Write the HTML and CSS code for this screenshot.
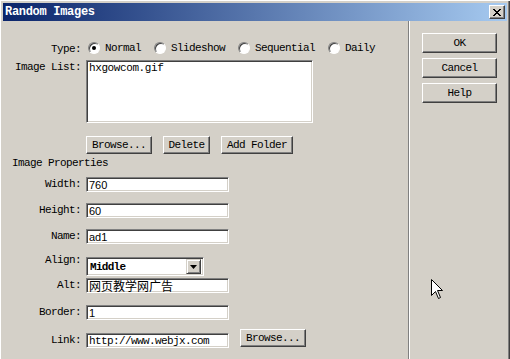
FILE: index.html
```html
<!DOCTYPE html>
<html lang="en">
<head>
  <meta charset="UTF-8" />
  <title>Random Images</title>
  <link rel="stylesheet" href="styles.css">
</head>
<body>

<div class="window">
  <div class="titlebar">
    <span class="title">Random Images</span>
    <span class="close">
      <svg width="8" height="7" viewBox="0 0 8 7"><path d="M0 0 L7 7 M1 0 L8 7 M7 0 L0 7 M8 0 L1 7" stroke="#000" stroke-width="1"/></svg>
    </span>
  </div>

  <div class="content">
    <div class="main">
      <div class="row row-type">
        <label class="lbl">Type:</label>
        <div class="radios">
          <span class="opt"><span class="radio checked"></span>Normal</span>
          <span class="opt"><span class="radio"></span>Slideshow</span>
          <span class="opt"><span class="radio"></span>Sequential</span>
          <span class="opt"><span class="radio"></span>Daily</span>
        </div>
      </div>

      <div class="row row-list">
        <label class="lbl lbl-top">Image List:</label>
        <textarea class="field list">hxgowcom.gif</textarea>
      </div>

      <div class="row row-buttons">
        <button class="btn btn-browse">Browse...</button>
        <button class="btn btn-delete">Delete</button>
        <button class="btn btn-folder">Add Folder</button>
      </div>

      <div class="heading">Image Properties</div>

      <div class="row row-width">
        <label class="lbl">Width:</label>
        <input class="field text sans" type="text" value="760" />
      </div>

      <div class="row row-gap">
        <label class="lbl">Height:</label>
        <input class="field text sans" type="text" value="60" />
      </div>

      <div class="row row-gap">
        <label class="lbl">Name:</label>
        <input class="field text sans" type="text" value="ad1" />
      </div>

      <div class="row row-align">
        <label class="lbl lbl-align">Align:</label>
        <div class="field select">
          <span class="select-text">Middle</span>
          <span class="arrow">
            <svg width="7" height="4" viewBox="0 0 7 4"><path d="M0 0 H7 L3.5 4 Z" fill="#000"/></svg>
          </span>
        </div>
      </div>

      <div class="row row-alt">
        <label class="lbl">Alt:</label>
        <input class="field text cjk" type="text" value="网页教学网广告" />
      </div>

      <div class="row row-border">
        <label class="lbl">Border:</label>
        <input class="field text sans" type="text" value="1" />
      </div>

      <div class="row row-link">
        <label class="lbl">Link:</label>
        <input class="field text mono" type="text" value="http://www.webjx.com" />
        <button class="btn btn-browse btn-link">Browse...</button>
      </div>
    </div>

    <div class="side">
      <button class="btn side-btn">OK</button>
      <button class="btn side-btn">Cancel</button>
      <button class="btn side-btn">Help</button>
    </div>
  </div>

  <!-- mouse pointer -->
  <svg class="pointer" width="13" height="21" viewBox="0 0 13 21">
    <path d="M0.5 0.5 V16.5 L4.5 12.5 L7.5 19.5 L9.5 18.5 L6.5 11.5 H11.5 Z" fill="#fff" stroke="#000" stroke-width="1"/>
  </svg>
</div>

</body>
</html>
```

FILE: styles.css
```css
body {
  margin: 0;
  background: #d4d0c8;
  font-family: "Liberation Mono", "DejaVu Sans Mono", monospace;
  font-size: 11px;
  letter-spacing: -0.6px;
  color: #000;
}
.window {
  position: relative;
  width: 510px;
  height: 359px;
  box-sizing: border-box;
  padding: 3px 3px 0 3px;
  background: #d4d0c8;
  box-shadow: inset 1px 1px #fff, inset -1px 0 #404040, inset -2px 0 #808080;
  overflow: hidden;
}
.titlebar {
  height: 18px;
  display: flex;
  align-items: center;
  justify-content: space-between;
  padding: 0 2px 0 2px;
  background: linear-gradient(to right, #0a246a, #a6caf0);
}
.title {
  color: #fff;
  font-weight: bold;
  font-size: 12px;
  letter-spacing: -0.3px;
}
.close {
  width: 16px;
  height: 14px;
  box-sizing: border-box;
  display: flex;
  align-items: center;
  justify-content: center;
  background: #d4d0c8;
  border: 1px solid;
  border-color: #fff #404040 #404040 #fff;
  box-shadow: inset -1px -1px #808080;
}
.content {
  display: flex;
  height: 338px;
}
.main {
  width: 406px;
  box-sizing: border-box;
  border-right: 1px solid #808080;
  display: flex;
  flex-direction: column;
}
.side {
  border-left: 1px solid #fff;
  padding: 12px 0 0 12px;
  display: flex;
  flex-direction: column;
  gap: 5px;
}
.row {
  display: flex;
  align-items: flex-start;
}
.lbl {
  width: 78px;
  margin-right: 5px;
  text-align: right;
  line-height: 15px;
  flex: none;
}
.lbl-top {
  line-height: 12px;
  margin-top: 1px;
}
.row-type {
  margin-top: 21px;
  height: 12px;
  align-items: center;
}
.row-type .lbl {
  line-height: 12px;
  margin-top: 1px;
}
.radios {
  display: flex;
  align-items: center;
  margin-left: 2px;
}
.opt {
  display: flex;
  align-items: center;
  margin-right: 13px;
}
.radio {
  width: 12px;
  height: 12px;
  box-sizing: border-box;
  margin-right: 5px;
  border-radius: 50%;
  background: #fff;
  border: 1px solid;
  border-color: #808080 #fff #fff #808080;
  box-shadow: inset 1px 1px #404040;
  position: relative;
}
.radio.checked::after {
  content: "";
  position: absolute;
  left: 3px;
  top: 3px;
  width: 4px;
  height: 4px;
  border-radius: 50%;
  background: #000;
}
.field {
  box-sizing: border-box;
  background: #fff;
  border: 1px solid;
  border-color: #808080 #fff #fff #808080;
  box-shadow: inset 1px 1px #404040, inset -1px -1px #d4d0c8;
  margin: 0;
  outline: none;
  color: #000;
}
.row-list {
  margin-top: 6px;
}
.list {
  width: 227px;
  height: 63px;
  padding: 1px 2px;
  resize: none;
  font-family: "Liberation Mono", "DejaVu Sans Mono", monospace;
  font-size: 11px;
  letter-spacing: -0.4px;
  line-height: 13px;
}
.btn {
  box-sizing: border-box;
  height: 18px;
  padding: 0;
  background: #d4d0c8;
  border: 1px solid;
  border-color: #fff #404040 #404040 #fff;
  box-shadow: inset -1px -1px #808080;
  font-family: "Liberation Mono", "DejaVu Sans Mono", monospace;
  font-size: 11px;
  letter-spacing: -0.6px;
  color: #000;
}
.row-buttons {
  margin-top: 13px;
  padding-left: 83px;
  gap: 11px;
}
.btn-browse {
  width: 66px;
}
.btn-delete {
  width: 47px;
}
.btn-folder {
  width: 72px;
}
.heading {
  margin-top: 3px;
  padding-left: 9px;
  line-height: 12px;
}
.text {
  width: 143px;
  height: 15px;
  padding: 0 2px;
  font-size: 11px;
}
.sans {
  font-family: "Liberation Sans", Arial, sans-serif;
  letter-spacing: 0;
}
.mono {
  font-family: "Liberation Mono", "DejaVu Sans Mono", monospace;
  letter-spacing: -0.6px;
}
.cjk {
  font-family: "Noto Sans CJK SC", sans-serif;
  font-size: 12px;
  letter-spacing: 0;
  line-height: 13px;
}
.row-width {
  margin-top: 8px;
}
.row-gap {
  margin-top: 11px;
}
.row-align {
  margin-top: 13px;
}
.lbl-align {
  line-height: 12px;
  margin-top: -3px;
}
.select {
  width: 118px;
  height: 19px;
  display: flex;
  align-items: center;
  justify-content: space-between;
  padding: 0 2px 0 3px;
}
.select-text {
  font-weight: bold;
  letter-spacing: -0.7px;
}
.arrow {
  width: 15px;
  height: 15px;
  box-sizing: border-box;
  display: flex;
  align-items: center;
  justify-content: center;
  background: #d4d0c8;
  border: 1px solid;
  border-color: #d4d0c8 #404040 #404040 #d4d0c8;
  box-shadow: inset 1px 1px #fff, inset -1px -1px #808080;
}
.row-alt {
  margin-top: 2px;
}
.row-border {
  margin-top: 12px;
}
.row-link {
  margin-top: 13px;
}
.btn-link {
  margin: -4px 0 0 11px;
}
.side-btn {
  width: 75px;
  height: 20px;
}
.pointer {
  position: absolute;
  left: 431px;
  top: 279px;
}
```
